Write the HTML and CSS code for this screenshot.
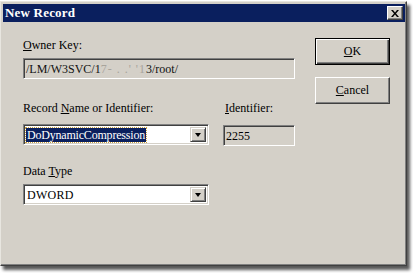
FILE: index.html
```html
<!DOCTYPE html>
<html>
<head>
<meta charset="utf-8">
<link rel="stylesheet" href="styles.css">
</head>
<body>
<div class="window">
  <div class="titlebar">
    <span class="title">New Record</span>
    <span class="close">
      <svg width="8" height="7" viewBox="0 0 8 7"><path d="M0 0h2l2 2.5L6 0h2L5 3.5 8 7H6L4 4.5 2 7H0l3-3.5z" fill="#000"/></svg>
    </span>
  </div>
  <div class="content">
    <div class="form">
      <div class="label"><u>O</u>wner Key:</div>
      <div class="field disabled owner">/LM/W3SVC/1<span class="blur">7-  .  .'  '1</span>3/root/</div>
      <div class="row">
        <div class="col-name">
          <div class="label">Record <u>N</u>ame or Identifier:</div>
          <div class="combo"><span class="sel">DoDynamicCompression</span><span class="drop"><i></i></span></div>
        </div>
        <div class="col-id">
          <div class="label"><u>I</u>dentifier:</div>
          <div class="field disabled idf">2255</div>
        </div>
      </div>
      <div class="label type-label">Data <u>T</u>ype</div>
      <div class="combo type"><span class="val">DWORD</span><span class="drop"><i></i></span></div>
    </div>
    <div class="buttons">
      <div class="btn default"><span><u>O</u>K</span></div>
      <div class="btn"><span><u>C</u>ancel</span></div>
    </div>
  </div>
</div>
</body>
</html>
```
FILE: styles.css
```css
html, body {
  margin: 0;
  padding: 0;
  background: #fff;
}
body {
  width: 413px;
  height: 273px;
  overflow: hidden;
  font-family: "Liberation Serif", serif;
  font-size: 12px;
  color: #000;
}
.window {
  box-sizing: border-box;
  width: 407px;
  height: 265px;
  margin-top: 1px;
  background: #d4d0c8;
  border-style: solid;
  border-width: 1px;
  border-color: #e8e6e0 #404040 #404040 #e8e6e0;
  padding: 2px 1px 1px 2px;
  box-shadow: inset -1px -1px 0 #808080, 3px 4px 3px rgba(0,0,0,0.65);
}
.titlebar {
  height: 18px;
  background: #0a1f5e;
  display: flex;
  align-items: center;
  justify-content: space-between;
  padding: 0 2px;
}
.title {
  color: #fff;
  font-family: "Liberation Serif", serif;
  font-weight: bold;
  font-size: 13px;
  letter-spacing: 0.2px;
}
.close {
  box-sizing: border-box;
  width: 16px;
  height: 14px;
  background: #d4d0c8;
  border: 1px solid;
  border-color: #fff #404040 #404040 #fff;
  box-shadow: inset -1px -1px 0 #808080;
  display: flex;
  align-items: center;
  justify-content: center;
}
.close svg { display: block; }
.content {
  display: flex;
  padding: 16px 0 0 20px;
}
.form {
  width: 272px;
}
.label {
  line-height: 14px;
  height: 14px;
  white-space: nowrap;
}
.field {
  box-sizing: border-box;
  height: 21px;
  border: 1px solid;
  border-color: #808080 #fff #fff #808080;
  box-shadow: inset 1px 1px 0 #404040, inset -1px -1px 0 #d4d0c8;
  padding: 3px 0 0 2px;
  line-height: 14px;
  white-space: nowrap;
  overflow: hidden;
}
.disabled { background: #d4d0c8; }
.owner { margin-top: 6px; color: #111; }
.blur { color: #a8a49c; letter-spacing: 1px; }
.row {
  display: flex;
  margin-top: 22px;
}
.col-name { width: 186px; }
.col-id { margin-left: 14px; width: 72px; }
.col-id .label { padding-left: 2px; }
.idf { margin-top: 10px; }
.combo {
  box-sizing: border-box;
  height: 21px;
  margin-top: 9px;
  background: #fff;
  border: 1px solid;
  border-color: #808080 #fff #fff #808080;
  box-shadow: inset 1px 1px 0 #404040, inset -1px -1px 0 #d4d0c8;
  padding: 2px;
  display: flex;
  align-items: center;
  justify-content: space-between;
  line-height: 14px;
}
.sel {
  background: #0a1f5e;
  color: #fff;
  padding: 0 1px;
  letter-spacing: -0.2px;
  outline: 1px dotted #c8a040;
}
.val { padding-left: 1px; letter-spacing: 0.3px; }
.drop {
  box-sizing: border-box;
  width: 16px;
  height: 15px;
  background: #d4d0c8;
  border: 1px solid;
  border-color: #d4d0c8 #404040 #404040 #d4d0c8;
  box-shadow: inset 1px 1px 0 #fff, inset -1px -1px 0 #808080;
  display: flex;
  align-items: center;
  justify-content: center;
}
.drop i {
  display: block;
  width: 0;
  height: 0;
  border-left: 3.5px solid transparent;
  border-right: 3.5px solid transparent;
  border-top: 4px solid #000;
}
.type-label { margin-top: 18px; }
.type { width: 186px; margin-top: 6px; }
.buttons {
  margin-left: 20px;
  display: flex;
  flex-direction: column;
  gap: 12px;
}
.btn {
  box-sizing: border-box;
  width: 75px;
  height: 27px;
  border: 1px solid;
  border-color: #fff #404040 #404040 #fff;
  box-shadow: inset -1px -1px 0 #808080;
  display: flex;
  align-items: center;
  justify-content: center;
}
.default {
  border: 1px solid #000;
  box-shadow: inset 1px 1px 0 #fff, inset -1px -1px 0 #404040, inset -2px -2px 0 #808080;
}
```
